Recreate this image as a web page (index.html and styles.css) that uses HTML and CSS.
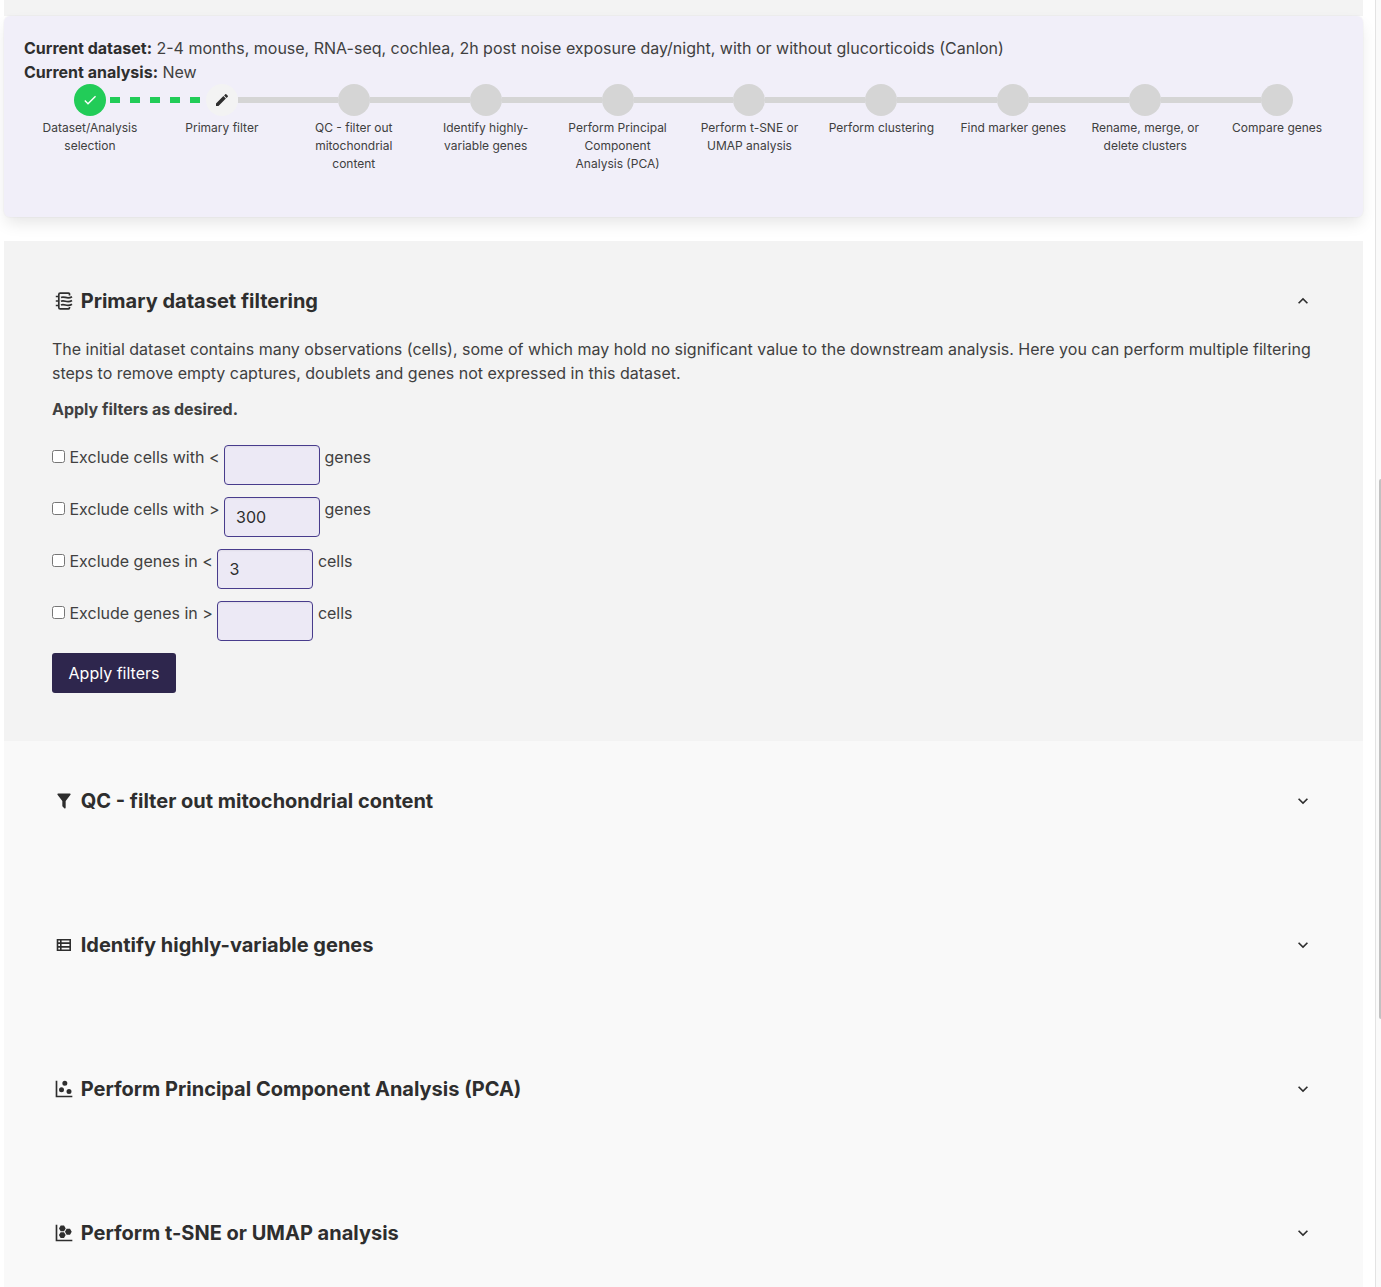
FILE: index.html
```html
<!DOCTYPE html>
<html lang="en">
<head>
<meta charset="utf-8">
<title>Single-cell workbench</title>
<link rel="stylesheet" href="styles.css">
</head>
<body>
<div class="page">
<main class="content">
  <div class="prev-section"></div>
  <section class="status-card">
    <p><strong>Current dataset:</strong> 2-4 months, mouse, RNA-seq, cochlea, 2h post noise exposure day/night, with or without glucorticoids (Canlon)</p>
    <p><strong>Current analysis:</strong> New</p>
    <ol class="steps">
      <li class="step done"><span class="marker"><svg width="16" height="16" viewBox="0 0 24 24"><path d="M21,7L9,19L3.5,13.5L4.91,12.09L9,16.17L19.59,5.59L21,7Z"/></svg></span><span class="label">Dataset/Analysis selection</span></li>
      <li class="step active"><span class="marker"><svg width="16" height="16" viewBox="0 0 24 24"><path d="M20.71,7.04C21.1,6.65 21.1,6 20.71,5.63L18.37,3.29C18,2.9 17.35,2.9 16.96,3.29L15.12,5.12L18.87,8.87M3,17.25V21H6.75L17.81,9.93L14.06,6.18L3,17.25Z"/></svg></span><span class="label">Primary filter</span></li>
      <li class="step"><span class="marker"></span><span class="label">QC - filter out mitochondrial content</span></li>
      <li class="step"><span class="marker"></span><span class="label">Identify highly-variable genes</span></li>
      <li class="step"><span class="marker"></span><span class="label">Perform Principal Component Analysis (PCA)</span></li>
      <li class="step"><span class="marker"></span><span class="label">Perform t-SNE or UMAP analysis</span></li>
      <li class="step"><span class="marker"></span><span class="label">Perform clustering</span></li>
      <li class="step"><span class="marker"></span><span class="label">Find marker genes</span></li>
      <li class="step"><span class="marker"></span><span class="label">Rename, merge, or delete clusters</span></li>
      <li class="step"><span class="marker"></span><span class="label">Compare genes</span></li>
    </ol>
  </section>

  <section class="panel open">
    <header class="panel-head">
      <span class="icon"><svg width="20" height="20" viewBox="0 0 20 20"><g fill="none" stroke="currentColor" stroke-width="1.700"><path d="M15.500 4.500V3.200Q15.500 2.200 14.500 2.200H6.200Q4.800 2.200 4.800 3.600V16.400Q4.800 17.800 6.200 17.800H14.500Q15.500 17.800 15.500 16.800V16M1.800 5.500H5M1.800 10H5M1.800 14.500H5"/><path d="M7 6.500C10.500 4.500 13 9 18 5.700M7 10.300C10.500 8.300 13 12.800 18 9.500M7 14.100C10.500 12.100 13 16.600 18 13.300"/></g></svg></span>
      <h2>Primary dataset filtering</h2>
      <span class="toggle"><svg width="20" height="20" viewBox="0 0 24 24"><path d="M7.410,15.410L12,10.830L16.590,15.410L18,14L12,8L6,14L7.410,15.410Z"/></svg></span>
    </header>
    <p class="intro">The initial dataset contains many observations (cells), some of which may hold no significant value to the downstream analysis. Here you can perform multiple filtering steps to remove empty captures, doublets and genes not expressed in this dataset.</p>
    <p class="hint"><strong>Apply filters as desired.</strong></p>
    <form class="filters">
      <div class="filter"><input type="checkbox"><span>Exclude cells with &lt;</span><input class="num" type="text"><span>genes</span></div>
      <div class="filter"><input type="checkbox"><span>Exclude cells with &gt;</span><input class="num" type="text" value="300"><span>genes</span></div>
      <div class="filter"><input type="checkbox"><span>Exclude genes in &lt;</span><input class="num" type="text" value="3"><span>cells</span></div>
      <div class="filter"><input type="checkbox"><span>Exclude genes in &gt;</span><input class="num" type="text"><span>cells</span></div>
      <button type="button" class="apply">Apply filters</button>
    </form>
  </section>

  <section class="panel">
    <header class="panel-head">
      <span class="icon"><svg width="20" height="20" viewBox="0 0 24 24"><path d="M14,12V19.880C14.040,20.180 13.940,20.500 13.710,20.710C13.320,21.100 12.690,21.100 12.300,20.710L10.290,18.700C10.060,18.470 9.960,18.160 10,17.870V12H9.970L4.210,4.620C3.870,4.190 3.950,3.560 4.380,3.220C4.570,3.080 4.780,3 5,3H19C19.220,3 19.430,3.080 19.620,3.220C20.050,3.560 20.130,4.190 19.790,4.620L14.030,12H14Z"/></svg></span>
      <h2>QC - filter out mitochondrial content</h2>
      <span class="toggle"><svg width="20" height="20" viewBox="0 0 24 24"><path d="M7.410,8.580L12,13.170L16.590,8.580L18,10L12,16L6,10L7.410,8.580Z"/></svg></span>
    </header>
  </section>
  <section class="panel">
    <header class="panel-head">
      <span class="icon"><svg width="20" height="20" viewBox="0 0 20 20"><path fill-rule="evenodd" d="M2.700 4H17V16H2.700ZM4.300 5.600V7.200H6V5.600ZM7.600 5.600V7.200H15.400V5.600ZM4.300 9.100V10.900H6V9.100ZM7.600 9.100V10.900H15.400V9.100ZM4.300 12.800V14.400H6V12.800ZM7.600 12.800V14.400H15.400V12.800Z"/></svg></span>
      <h2>Identify highly-variable genes</h2>
      <span class="toggle"><svg width="20" height="20" viewBox="0 0 24 24"><path d="M7.410,8.580L12,13.170L16.590,8.580L18,10L12,16L6,10L7.410,8.580Z"/></svg></span>
    </header>
  </section>
  <section class="panel">
    <header class="panel-head">
      <span class="icon"><svg width="20" height="20" viewBox="0 0 24 24"><path d="M2,2H4V20H22V22H2V2M9,10A3,3 0 0,1 12,13A3,3 0 0,1 9,16A3,3 0 0,1 6,13A3,3 0 0,1 9,10M13,2A3,3 0 0,1 16,5A3,3 0 0,1 13,8A3,3 0 0,1 10,5A3,3 0 0,1 13,2M18,12A3,3 0 0,1 21,15A3,3 0 0,1 18,18A3,3 0 0,1 15,15A3,3 0 0,1 18,12Z"/></svg></span>
      <h2>Perform Principal Component Analysis (PCA)</h2>
      <span class="toggle"><svg width="20" height="20" viewBox="0 0 24 24"><path d="M7.410,8.580L12,13.170L16.590,8.580L18,10L12,16L6,10L7.410,8.580Z"/></svg></span>
    </header>
  </section>
  <section class="panel">
    <header class="panel-head">
      <span class="icon"><svg width="20" height="20" viewBox="0 0 24 24"><path d="M2,2H4V20H22V22H2V2M14,14.500L12,18H7.940L5.920,14.500L7.940,11H12L14,14.500M14.080,6.500L12.060,10H8L6,6.500L8,3H12.060L14.080,6.500M21.250,10.500L19.230,14H15.190L13.170,10.500L15.190,7H19.230L21.250,10.500Z"/></svg></span>
      <h2>Perform t-SNE or UMAP analysis</h2>
      <span class="toggle"><svg width="20" height="20" viewBox="0 0 24 24"><path d="M7.410,8.580L12,13.170L16.590,8.580L18,10L12,16L6,10L7.410,8.580Z"/></svg></span>
    </header>
  </section>
</main>
<aside class="scroll-track"><div class="scroll-thumb"></div></aside>
</div>
</body>
</html>
```
FILE: styles.css
```css
* { box-sizing: border-box; }
body, p, h2, ol { margin: 0; padding: 0; }
body {
  font: 400 16px/24px Inter, sans-serif;
  color: #404040;
  background: #fff;
  overflow: hidden;
}
strong { font-weight: 700; color: #2e2e2e; }
svg { display: block; fill: currentColor; }

.page { display: flex; height: 1287px; overflow: hidden; padding-left: 4px; }
.content { width: 1359px; flex: none; }
.prev-section { height: 16px; background: #f3f3f3; }
.status-card {
  height: 201px;
  padding: 20px;
  border-radius: 6px;
  background: #f1eff9;
  box-shadow: 0 8px 16px -2px rgba(10, 10, 10, .1), 0 0 0 1px rgba(10, 10, 10, .02);
  margin-bottom: 24px;
}

.steps { display: flex; list-style: none; font-size: 12px; line-height: 18px; }
.step {
  flex: 1 1 0;
  position: relative;
  display: flex;
  flex-direction: column;
  align-items: center;
  text-align: center;
}
.step:not(:last-child)::after {
  content: "";
  position: absolute;
  left: calc(50% + 16px);
  top: 13px;
  width: calc(100% - 32px);
  height: 6px;
  background: #d5d5d5;
}
.step.done::after {
  background: repeating-linear-gradient(90deg, transparent 0 4px, #22cc58 4px 14px, transparent 14px 20px);
}
.marker {
  width: 32px;
  height: 32px;
  border-radius: 50%;
  background: #d5d5d5;
  display: flex;
  align-items: center;
  justify-content: center;
  color: #2e2e2e;
}
.done .marker { background: #22cc58; color: #fff; }
.active .marker { background: #f3f3f3; }
.label { width: 108px; margin-top: 3px; }

.panel { height: 144px; padding: 48px; background: #f9f9f9; }
.panel.open { height: 500px; background: #f3f3f3; }
.panel-head { display: flex; align-items: center; height: 24px; color: #2e2e2e; }
.icon { width: 24px; display: flex; justify-content: center; margin-right: 4.700px; }
h2 { font-size: 20px; line-height: 24px; font-weight: 700; flex: 1; }
.toggle { margin-right: 2px; }
.intro { margin-top: 24px; }
.hint { margin-top: 12px; }
.hint strong { color: #404040; }
.filters { margin-top: 24px; }
.filter { display: flex; align-items: flex-start; height: 40px; margin-bottom: 12px; }
.filter input[type="checkbox"] { width: 13px; height: 13px; margin: 5px 4.500px 0 0; }
.num {
  width: 96px;
  height: 40px;
  margin: 0 4.500px;
  padding: 0 11px;
  border: 1px solid #483c8c;
  border-radius: 4px;
  background: #ece9f5;
  box-shadow: inset 0 1px 2px rgba(10, 10, 10, .05);
  font: inherit;
  color: #2e2e2e;
}
.apply {
  height: 40px;
  width: 124px;
  border: 0;
  border-radius: 3px;
  background: #2e264d;
  color: #fff;
  font: inherit;
  padding: 0;
}

.scroll-track {
  margin-left: 12px;
  width: 6px;
  flex: none;
  padding: 479px 0 0 3px;
  border-left: 1px solid #e3e3e3;
  background: #fafafa;
}
.scroll-thumb { height: 540px; background: #c1c1c1; border-radius: 4px 0 0 4px; }
```
